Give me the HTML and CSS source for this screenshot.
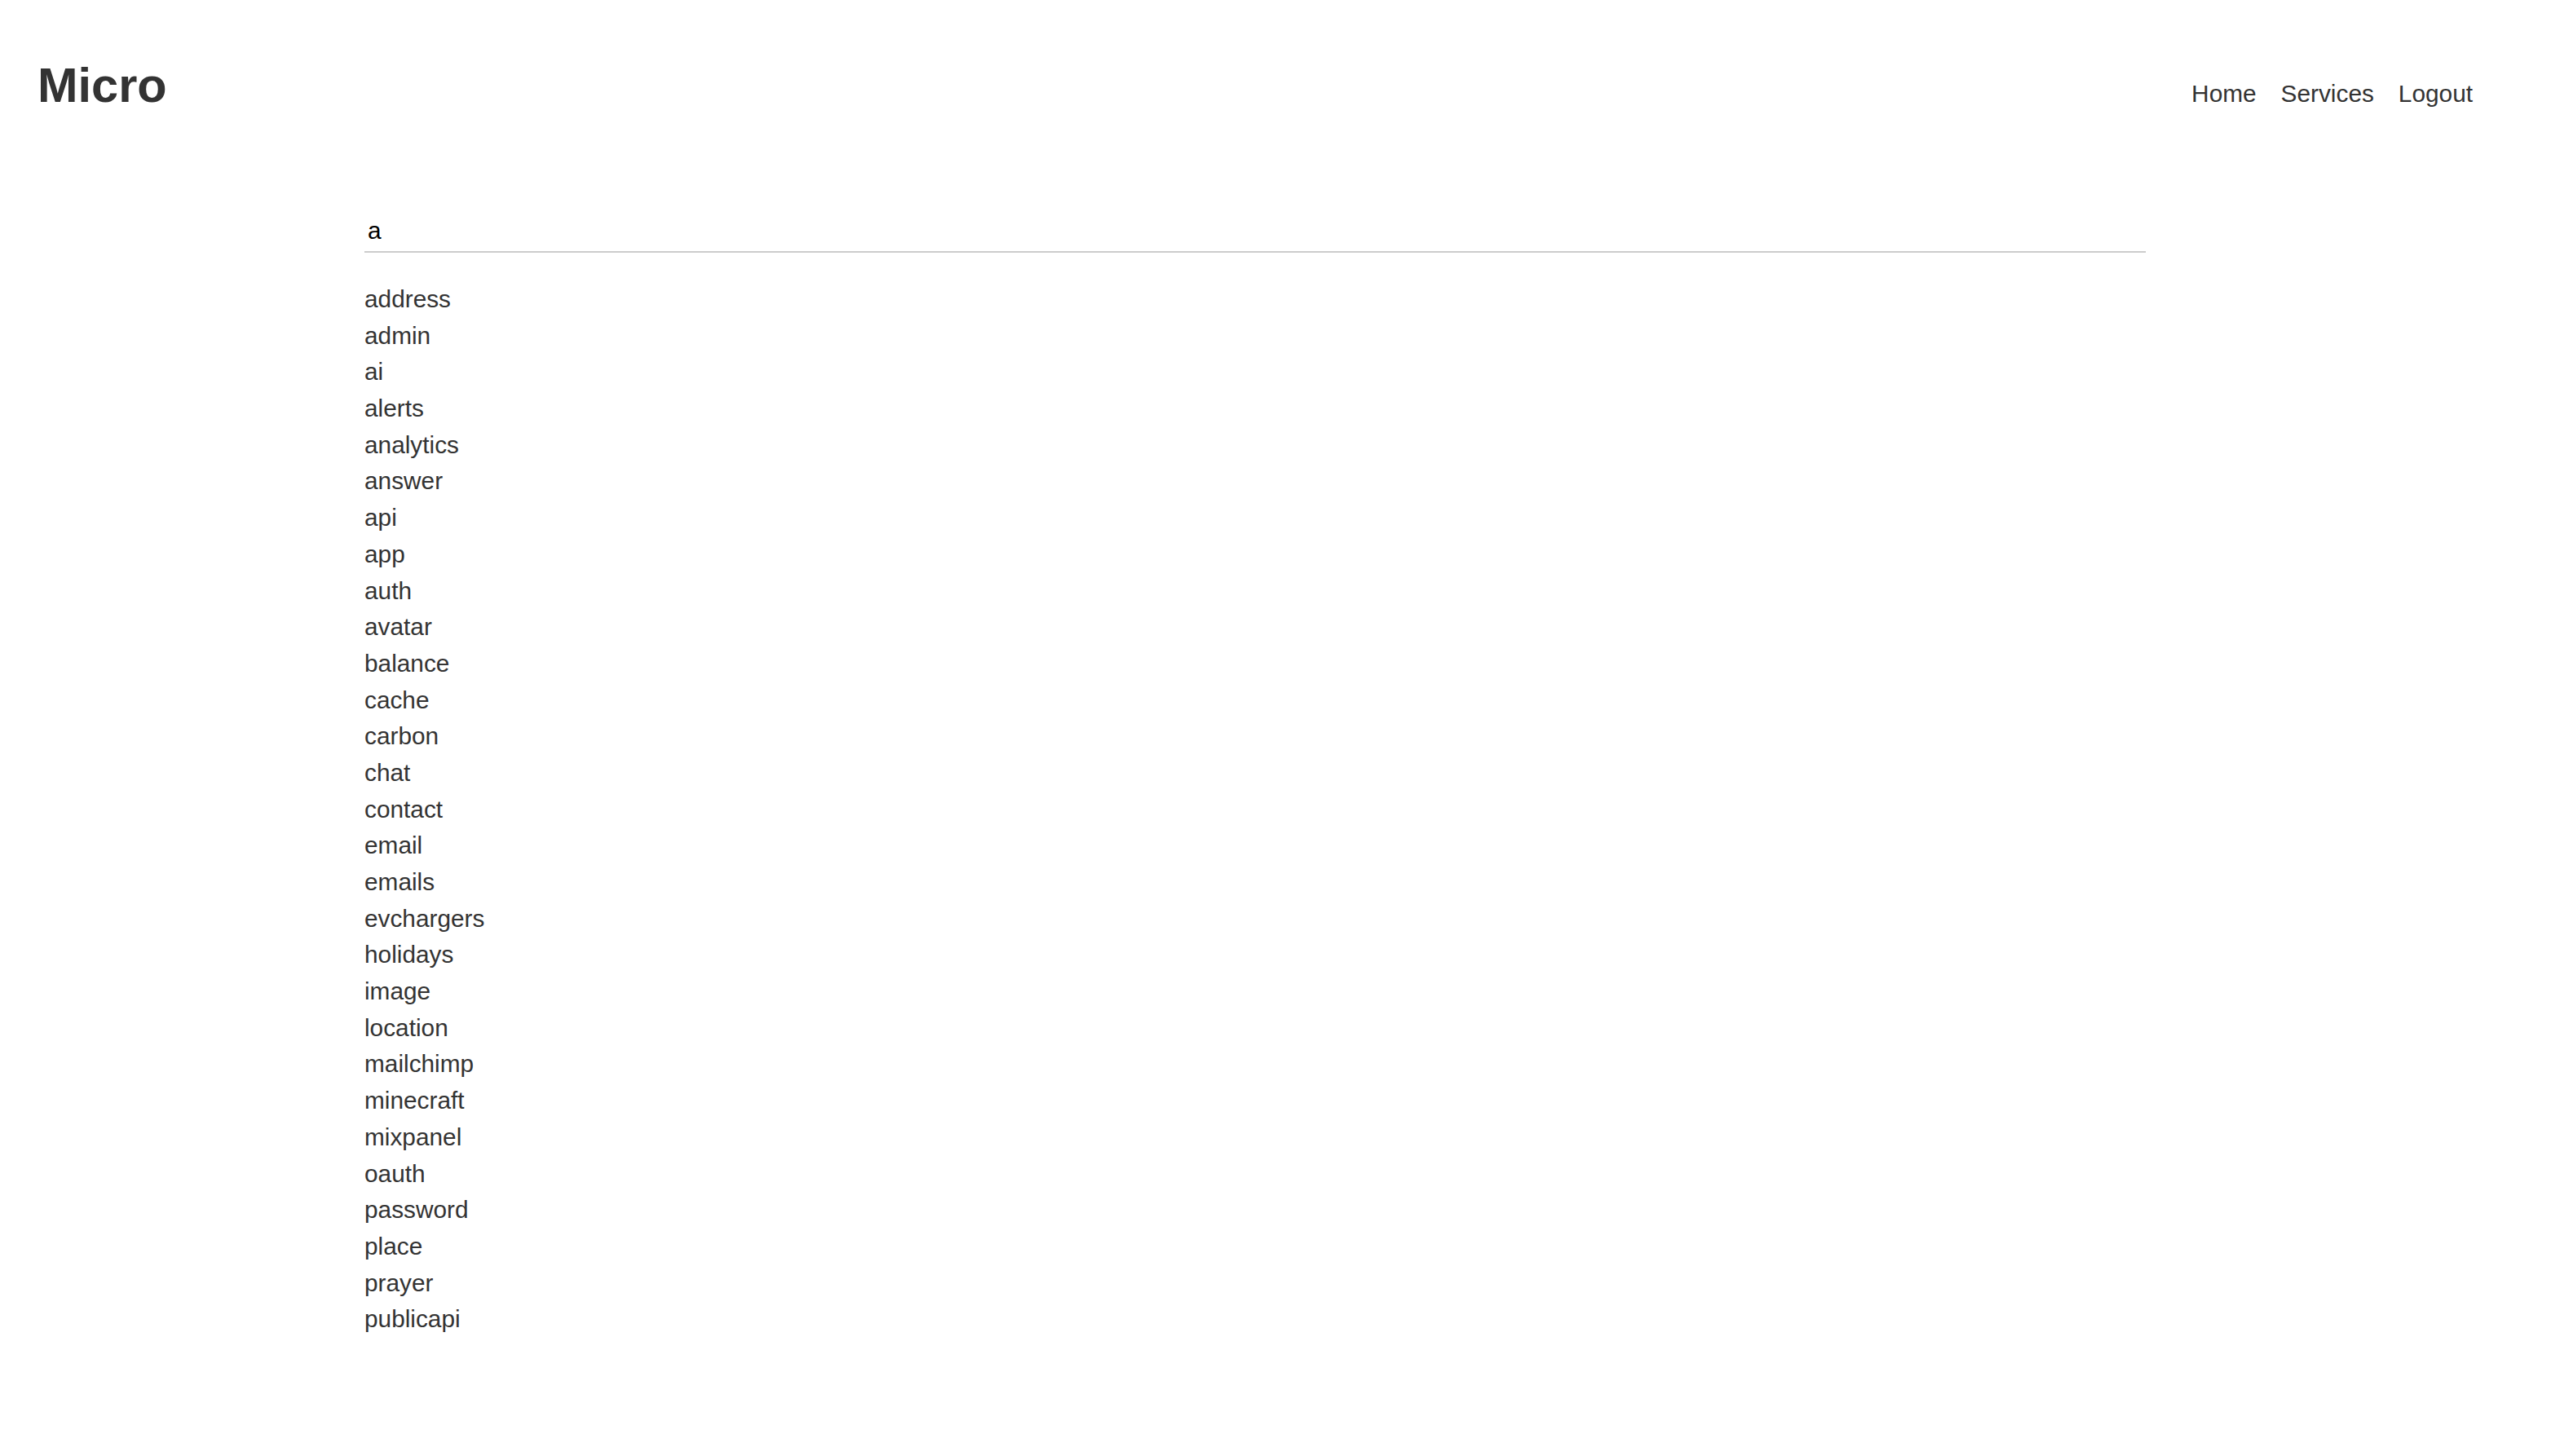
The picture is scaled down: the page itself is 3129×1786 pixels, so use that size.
FILE: index.html
```html
<!DOCTYPE html>
<html lang="en">
<head>
    <meta charset="UTF-8">
    <meta name="viewport" content="width=device-width, initial-scale=1.0">
    <title>Micro</title>
    <link rel="stylesheet" href="styles.css">
</head>
<body>
    <header>
        <h1>Micro</h1>
        <nav>
            <a href="#">Home</a>
            <a href="#">Services</a>
            <a href="#">Logout</a>
        </nav>
    </header>

    <main class="content">
        <input class="search" type="text" name="q" value="a">
        <ul class="services">
            <li><a href="#">address</a></li>
            <li><a href="#">admin</a></li>
            <li><a href="#">ai</a></li>
            <li><a href="#">alerts</a></li>
            <li><a href="#">analytics</a></li>
            <li><a href="#">answer</a></li>
            <li><a href="#">api</a></li>
            <li><a href="#">app</a></li>
            <li><a href="#">auth</a></li>
            <li><a href="#">avatar</a></li>
            <li><a href="#">balance</a></li>
            <li><a href="#">cache</a></li>
            <li><a href="#">carbon</a></li>
            <li><a href="#">chat</a></li>
            <li><a href="#">contact</a></li>
            <li><a href="#">email</a></li>
            <li><a href="#">emails</a></li>
            <li><a href="#">evchargers</a></li>
            <li><a href="#">holidays</a></li>
            <li><a href="#">image</a></li>
            <li><a href="#">location</a></li>
            <li><a href="#">mailchimp</a></li>
            <li><a href="#">minecraft</a></li>
            <li><a href="#">mixpanel</a></li>
            <li><a href="#">oauth</a></li>
            <li><a href="#">password</a></li>
            <li><a href="#">place</a></li>
            <li><a href="#">prayer</a></li>
            <li><a href="#">publicapi</a></li>
        </ul>
    </main>
</body>
</html>
```

FILE: styles.css
```css
body {
    font-family: "Liberation Sans", Arial, sans-serif;
    font-size: 29.8px;
    margin: 0;
    padding: 0;
    background-color: #fff;
    color: #333;
}
header {
    display: flex;
    justify-content: space-between;
    align-items: baseline;
    padding: 70px 96px 0 46px;
}
header h1 {
    margin: 0;
    font-size: 59.5px;
    font-weight: bold;
}
nav {
    display: flex;
    gap: 30px;
}
nav a {
    text-decoration: none;
    color: #333;
}
.content {
    width: 2185px;
    margin: 117px 0 0 447px;
}
.search {
    display: block;
    box-sizing: border-box;
    width: 100%;
    padding: 10px 4px 8px;
    border: none;
    border-bottom: 2px solid #ccc;
    outline: none;
    font-family: inherit;
    font-size: 29.8px;
    color: #000;
}
.services {
    list-style: none;
    margin: 35px 0 0 0;
    padding: 0;
    line-height: 1.5;
}
.services a {
    text-decoration: none;
    color: #333;
}
```
